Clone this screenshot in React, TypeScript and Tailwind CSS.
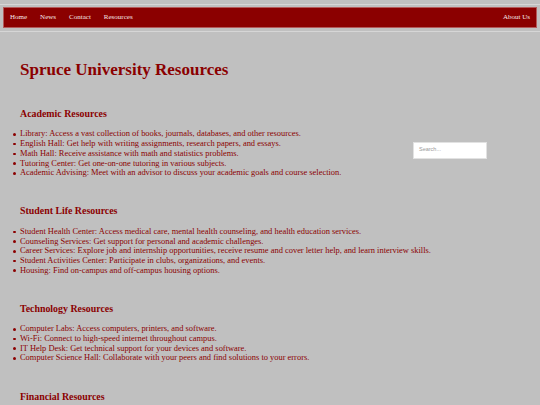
import React from "react";

const sections: { title: string; items: string[] }[] = [
  {
    title: "Academic Resources",
    items: [
      "Library: Access a vast collection of books, journals, databases, and other resources.",
      "English Hall: Get help with writing assignments, research papers, and essays.",
      "Math Hall: Receive assistance with math and statistics problems.",
      "Tutoring Center: Get one-on-one tutoring in various subjects.",
      "Academic Advising: Meet with an advisor to discuss your academic goals and course selection.",
    ],
  },
  {
    title: "Student Life Resources",
    items: [
      "Student Health Center: Access medical care, mental health counseling, and health education services.",
      "Counseling Services: Get support for personal and academic challenges.",
      "Career Services: Explore job and internship opportunities, receive resume and cover letter help, and learn interview skills.",
      "Student Activities Center: Participate in clubs, organizations, and events.",
      "Housing: Find on-campus and off-campus housing options.",
    ],
  },
  {
    title: "Technology Resources",
    items: [
      "Computer Labs: Access computers, printers, and software.",
      "Wi-Fi: Connect to high-speed internet throughout campus.",
      "IT Help Desk: Get technical support for your devices and software.",
      "Computer Science Hall: Collaborate with your peers and find solutions to your errors.",
    ],
  },
  {
    title: "Financial Resources",
    items: [],
  },
];

export default function App() {
  return (
    <div
      className="h-[405px] w-[540px] overflow-hidden bg-[#c0c0c0] text-[#8b0000]"
      style={{ fontFamily: '"Liberation Serif", "Times New Roman", serif' }}
    >
      <header className="mt-[4px] border-y border-[#d6d6d6] px-[3px] pt-[2px] pb-[3px]">
        <nav className="flex h-[21px] items-center justify-between border border-[#b45a5a] bg-[#8b0000] px-[6px] text-[7px] leading-none text-[#f6e8e8]">
          <div className="flex items-center gap-[13px]">
            <span>Home</span>
            <span>News</span>
            <span>Contact</span>
            <span>Resources</span>
          </div>
          <span>About Us</span>
        </nav>
      </header>

      <main className="px-[20px]">
        <h1 className="mt-[27.5px] text-[17px] font-bold leading-[19.5px]">
          Spruce University Resources
        </h1>

        <div className="mt-[29px] flex flex-col gap-[27.5px]">
          {sections.map((s, i) => (
            <section key={s.title}>
              {i === 0 && (
                <div className="float-right mt-[33.5px] mr-[33px] flex h-[17px] w-[74px] items-center border border-[#e2e2e2] bg-white pl-[5px]">
                  <span
                    className="text-[5.5px] leading-none text-[#9a9a9a]"
                    style={{ fontFamily: '"Liberation Sans", Arial, sans-serif' }}
                  >
                    Search...
                  </span>
                </div>
              )}
              <h3 className="mb-[10px] text-[9.9px] font-bold leading-[11.4px]">
                {s.title}
              </h3>
              {s.items.length > 0 && (
                <ul className="text-[8.44px] leading-[9.7px]">
                  {s.items.map((it) => (
                    <li key={it} className="flex whitespace-nowrap">
                      <span className="-ml-[7px] mr-[4.5px] mt-[3.8px] h-[2.5px] w-[2.5px] shrink-0 rounded-full bg-[#8b0000]" />
                      <span>{it}</span>
                    </li>
                  ))}
                </ul>
              )}
            </section>
          ))}
        </div>
      </main>
    </div>
  );
}
